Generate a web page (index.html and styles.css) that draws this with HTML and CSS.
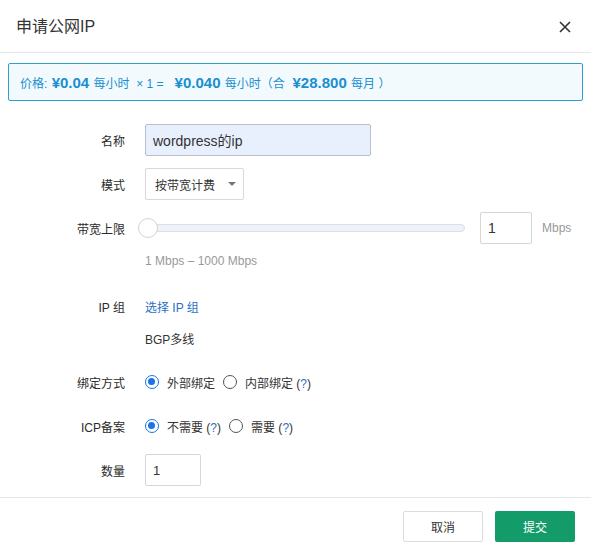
FILE: index.html
```html
<!DOCTYPE html>
<html>
<head>
<meta charset="utf-8">
<link rel="stylesheet" href="styles.css">
</head>
<body>
<div class="dialog">
  <div class="header">
    <div class="title">申请公网IP</div>
    <svg class="close" width="12" height="12" viewBox="0 0 12 12"><path d="M1 1L11 11M11 1L1 11" stroke="#333" stroke-width="1.6" fill="none"/></svg>
  </div>
  <div class="body">
    <div class="price">价格: <b>¥0.04</b> 每小时 &nbsp;× 1 = &nbsp; <b>¥0.040</b> 每小时（合 &nbsp;<b>¥28.800</b> 每月 ）</div>
    <div class="row r1">
      <div class="label">名称</div>
      <div class="input name">wordpress的ip</div>
    </div>
    <div class="row r2">
      <div class="label">模式</div>
      <div class="select">按带宽计费<span class="caret"></span></div>
    </div>
    <div class="row r3">
      <div class="label">带宽上限</div>
      <div class="slider"><div class="track"></div><div class="handle"></div></div>
      <div class="input bw">1</div>
      <div class="unit">Mbps</div>
    </div>
    <div class="hint">1 Mbps – 1000 Mbps</div>
    <div class="row r4">
      <div class="label">IP 组</div>
      <div class="link">选择 IP 组</div>
    </div>
    <div class="row r5">
      <div class="label"></div>
      <div class="text">BGP多线</div>
    </div>
    <div class="row r6">
      <div class="label">绑定方式</div>
      <div class="radio on"></div><span class="rtext">外部绑定</span>
      <div class="radio"></div><span class="rtext">内部绑定 (<span class="q">?</span>)</span>
    </div>
    <div class="row r7">
      <div class="label">ICP备案</div>
      <div class="radio on"></div><span class="rtext">不需要 (<span class="q">?</span>)</span>
      <div class="radio"></div><span class="rtext">需要 (<span class="q">?</span>)</span>
    </div>
    <div class="row r8">
      <div class="label">数量</div>
      <div class="input qty">1</div>
    </div>
  </div>
  <div class="footer">
    <div class="btn cancel">取消</div>
    <div class="btn submit">提交</div>
  </div>
</div>
</body>
</html>
```
FILE: styles.css
```css
html, body { margin: 0; padding: 0; background: #fff; }
body { font-family: "Liberation Sans", "Noto Sans CJK SC", sans-serif; color: #333; }
.dialog { width: 591px; height: 551px; overflow: hidden; }
.header { height: 52px; border-bottom: 1px solid #e6e6e6; display: flex; align-items: center; justify-content: space-between; padding: 0 20px 0 16px; box-sizing: content-box; }
.title { font-size: 16px; color: #333; margin-top: -2px; }
.close { margin-top: 2px; }
.body { padding: 10px 8px 0 8px; border-bottom: 1px solid #e6e6e6; height: 445px; box-sizing: border-box; }
.price { height: 38px; box-sizing: border-box; border: 1px solid #2d9fd3; background: #f2fafe; border-radius: 2px; color: #1a8fcf; font-size: 12px; display: flex; align-items: center; padding-left: 11px; white-space: pre; }
.price b { font-size: 15px; font-weight: bold; margin: 0 1px; }
.row { display: flex; align-items: center; height: 32px; }
.label { width: 117px; text-align: right; font-size: 12px; color: #2b2b2b; margin-right: 20px; flex: none; }
.r1 { margin-top: 23px; }
.r2, .r3 { margin-top: 12px; }
.input { height: 32px; box-sizing: border-box; border: 1px solid #ccc; border-radius: 2px; font-size: 14px; color: #333; display: flex; align-items: center; padding-left: 7px; }
.name { width: 226px; background: #e8f0fe; border-color: #b8bfcc; }
.select { width: 99px; height: 32px; box-sizing: border-box; border: 1px solid #d9d9d9; border-radius: 2px; font-size: 12px; display: flex; align-items: center; padding-left: 9px; }
.caret { width: 0; height: 0; border-left: 4px solid transparent; border-right: 4px solid transparent; border-top: 4px solid #777; margin-left: 13px; }
.slider { position: relative; width: 325px; height: 32px; margin-left: -5px; }
.track { position: absolute; left: 0; right: 0; top: 12px; height: 8px; box-sizing: border-box; border: 1px solid #dcdfe8; background: #f0f2f9; border-radius: 4px; }
.handle { position: absolute; left: -2px; top: 6px; width: 20px; height: 20px; box-sizing: border-box; border-radius: 50%; background: #fff; border: 1px solid #d2d2d2; }
.bw { width: 52px; margin-left: 15px; border-color: #d6d6d6; }
.unit { margin-left: 10px; font-size: 12px; color: #999; }
.hint { margin: 8px 0 0 137px; height: 18px; line-height: 18px; font-size: 12px; color: #999; }
.r4 { margin-top: 20px; }
.link { font-size: 12px; color: #2b6fc4; }
.r5 { margin-top: 6px; height: 20px; }
.text { font-size: 12px; color: #333; }
.r6 { margin-top: 18px; }
.r7 { margin-top: 12px; }
.r8 { margin-top: 12px; }
.qty { width: 56px; border-color: #d6d6d6; font-size: 13px; }
.radio { width: 14px; height: 14px; box-sizing: border-box; border-radius: 50%; border: 1px solid #555; background: #fff; margin-right: 8px; position: relative; flex: none; }
.radio.on { border: 1.5px solid #1a73e8; }
.radio.on::after { content: ""; position: absolute; left: 2px; top: 2px; width: 7px; height: 7px; border-radius: 50%; background: #1a73e8; }
.rtext { font-size: 12px; color: #333; margin-right: 8px; }
.q { color: #2b6fc4; }
.footer { display: flex; justify-content: flex-end; padding: 13px 16px 0 0; gap: 12px; }
.btn { width: 80px; height: 31px; box-sizing: border-box; border-radius: 2px; font-size: 12px; display: flex; align-items: center; justify-content: center; }
.cancel { border: 1px solid #dcdcdc; background: #fff; color: #333; }
.submit { background: #139c6a; color: #fff; }
```
